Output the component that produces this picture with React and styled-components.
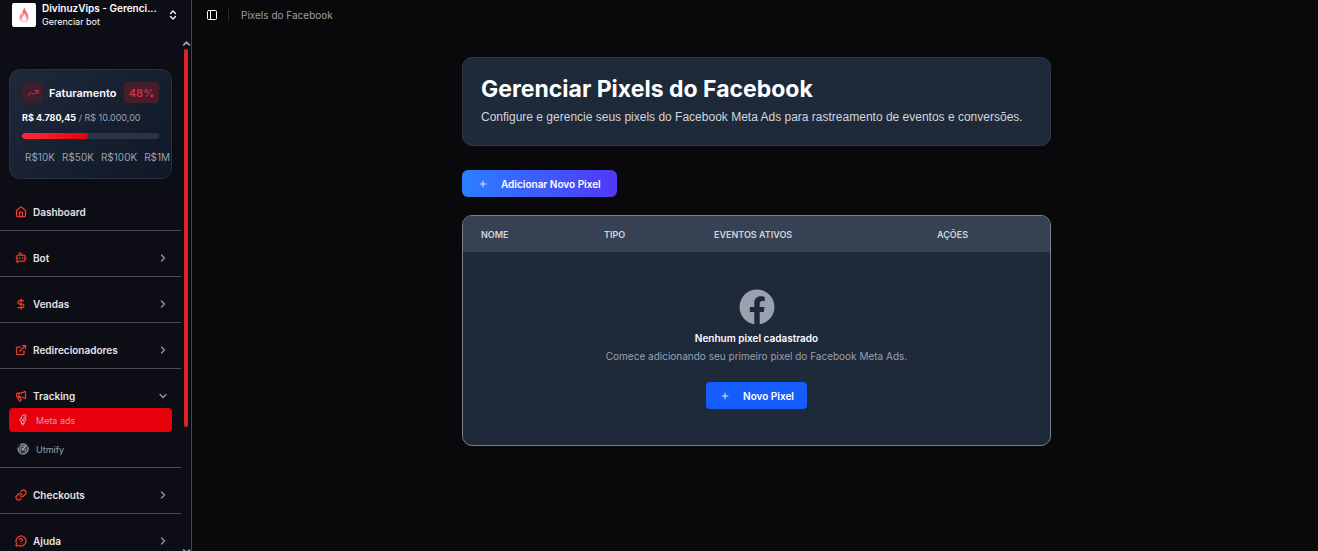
import React from "react";
import styled, { createGlobalStyle, css } from "styled-components";
import {
  BotMessageSquare,
  ChevronDown,
  ChevronRight,
  ChevronUp,
  ChevronsUpDown,
  DollarSign,
  ExternalLink,
  House,
  Link,
  Megaphone,
  MessageCircleQuestionMark,
  PanelLeft,
  Plus,
  Radar,
  TrendingUp,
} from "lucide-react";
import { FaFacebook } from "react-icons/fa";

const GlobalStyle = createGlobalStyle`
  *, *::before, *::after { box-sizing: border-box; }
  body {
    margin: 0;
    background: #09090b;
    color: #fff;
    font-family: Inter, "Liberation Sans", sans-serif;
    font-size: 10px;
  }
  h1, h2, p { margin: 0; }
  button { font: inherit; border: 0; cursor: pointer; }
  svg { flex: none; display: block; }
`;

const Shell = styled.div`
  display: flex;
  height: 100vh;
  overflow: hidden;
`;

/* ---------- sidebar ---------- */

const Sidebar = styled.aside`
  display: flex;
  flex-direction: column;
  flex: none;
  width: 192px;
  background: #0d0d15;
  border-right: 1px solid #46464e;
`;

const BotSwitcher = styled.button`
  display: flex;
  align-items: center;
  flex: none;
  gap: 6px;
  height: 38px;
  padding: 0 12px 8px;
  background: none;
  color: #fff;
  text-align: left;
`;

const BotLogo = styled.span`
  display: grid;
  place-items: center;
  flex: none;
  width: 24px;
  height: 24px;
  border-radius: 2px;
  background: #fff;
`;

const BotNames = styled.span`
  display: flex;
  flex-direction: column;
  flex: none;
  width: 119px;
  line-height: 13px;
`;

const BotName = styled.strong`
  white-space: nowrap;
  font-weight: 600;
`;

const BotRole = styled.span`
  font-size: 9px;
`;

const SidebarBody = styled.div`
  display: flex;
  flex: 1;
  min-height: 0;
  margin-bottom: -6px;
`;

const SidebarScroll = styled.div`
  flex: 1;
  min-width: 0;
  overflow: hidden;
  padding-top: 31px;
`;

const ScrollRail = styled.div`
  display: flex;
  flex-direction: column;
  align-items: center;
  flex: none;
  width: 10px;
  color: #a3a3a3;
`;

const ScrollTrack = styled.div`
  flex: 1;
  width: 4px;
`;

const ScrollThumb = styled.div`
  height: 76%;
  border-radius: 2px;
  background: #dc2626;
`;

const RevenueCard = styled.section`
  margin: 0 9px 6px;
  padding: 12px;
  height: 110px;
  border: 1px solid #2a313d;
  border-radius: 11px;
  background: linear-gradient(135deg, #1e2939, #101828);
`;

const RevenueHead = styled.div`
  display: flex;
  align-items: center;
  gap: 6px;
  font-size: 11px;
`;

const TrendBox = styled.span`
  display: grid;
  place-items: center;
  width: 21px;
  height: 21px;
  border-radius: 5px;
  background: #3d1f2d;
  color: #dc3545;
`;

const RevenueTitle = styled.h2`
  flex: 1;
  font-size: 11px;
  font-weight: 600;
`;

const Percent = styled.span`
  display: grid;
  place-items: center;
  width: 35px;
  height: 21px;
  border-radius: 4px;
  background: #471d2a;
  color: #d52f3e;
  font-weight: 600;
`;

const Amounts = styled.p`
  margin-top: 8px;
  line-height: 14px;
  font-size: 9px;
  color: #99a1af;
  white-space: nowrap;

  strong { color: #fff; }
`;

const Meter = styled.div`
  height: 6px;
  margin-top: 8px;
  border-radius: 3px;
  background: #2a3443;
  overflow: hidden;
`;

const MeterFill = styled.div`
  height: 100%;
  border-radius: 3px;
  background: linear-gradient(90deg, #fb2c36, #e7000b);
`;

const Milestones = styled.div`
  display: flex;
  gap: 7px;
  margin-top: 11px;
  padding-left: 3px;
  line-height: 15px;
  color: #99a1af;
`;

const NavGroup = styled.div`
  padding: 15px 9px 6px;
  border-bottom: 1px solid #4b4b55;
`;

const navRow = css`
  display: flex;
  align-items: center;
  width: 100%;
  height: 24px;
  border-radius: 4px;
  text-decoration: none;
`;

const NavItem = styled.button`
  ${navRow}
  gap: 6px;
  padding: 0 3px 0 6px;
  background: none;
  color: #e4e4e7;
  font-weight: 600;
  text-align: left;

  svg:first-child { color: #ee3d2c; }
  svg:last-child:not(:first-child) { color: #9a9aa5; }
`;

const NavLabel = styled.span`
  flex: 1;
`;

const SubNav = styled.div`
  display: flex;
  flex-direction: column;
  gap: 5px;
`;

const SubItem = styled.a`
  ${navRow}
  gap: 7px;
  padding: 0 8px;
  background: ${(p) => (p.$active ? "#e7000b" : "transparent")};
  color: ${(p) => (p.$active ? "#cba0aa" : "#99a1af")};
  font-size: 9px;
`;

/* ---------- main area ---------- */

const Main = styled.main`
  flex: 1;
  min-width: 0;
  overflow: hidden;
`;

const TopBar = styled.header`
  display: flex;
  align-items: center;
  height: 30px;
  padding-left: 14px;
`;

const PanelToggle = styled.button`
  display: grid;
  padding: 0;
  background: none;
  color: #fff;
`;

const TopDivider = styled.span`
  width: 1px;
  height: 12px;
  margin: 0 12px 0 10px;
  background: #2c2c30;
`;

const Crumb = styled.span`
  color: #9f9fa9;
`;

const ContentArea = styled.div`
  padding: 0 15px 0 18px;
`;

const Content = styled.div`
  display: flex;
  flex-direction: column;
  align-items: flex-start;
  max-width: 589px;
  margin: 27px auto 0;
`;

const Hero = styled.section`
  width: 100%;
  padding: 18px;
  border: 1px solid #303642;
  border-radius: 10px;
  background: #1e2939;
`;

const Title = styled.h1`
  font-size: 23px;
  line-height: 27px;
  font-weight: 700;
`;

const Subtitle = styled.p`
  margin-top: 4px;
  font-family: "Liberation Sans", sans-serif;
  font-size: 12px;
  line-height: 20px;
  color: #d1d5dc;
`;

const Button = styled.button`
  display: flex;
  align-items: center;
  height: 27px;
  gap: 13px;
  padding: 0 ${(p) => (p.$wide ? 16 : 13)}px 0 ${(p) => (p.$wide ? 16 : 14)}px;
  border-radius: ${(p) => (p.$wide ? 6 : 4)}px;
  background: ${(p) =>
    p.$wide ? "linear-gradient(90deg, #2b7fff, #4f39f6)" : "#155dfc"};
  color: #fff;
  font-weight: 600;
  white-space: nowrap;
`;

const AddRow = styled.div`
  margin: 24px 0 18px;
`;

const TableCard = styled.section`
  width: 100%;
  border: 1px solid #78808d;
  border-radius: 10px;
  background: #1e2939;
  overflow: hidden;
`;

const PixelTable = styled.table`
  width: 100%;
  border-collapse: collapse;
  table-layout: fixed;
`;

const Column = styled.col`
  width: ${(p) => p.$width || "auto"};
`;

const HeadCell = styled.th`
  height: 36px;
  padding: 0 18px;
  background: #364153;
  color: #d1d5dc;
  font-size: 9px;
  font-weight: 600;
  text-align: left;
`;

const EmptyCell = styled.td`
  padding: 37px 18px 36px;
`;

const Empty = styled.div`
  display: flex;
  flex-direction: column;
  align-items: center;
  line-height: 18px;
`;

const EmptyIcon = styled(FaFacebook)`
  color: #99a1af;
`;

const EmptyTitle = styled.h2`
  margin-top: 4px;
  font-size: 10px;
  font-weight: 600;
`;

const EmptyText = styled.p`
  margin-bottom: 17px;
  color: #99a1af;
`;

const PLUS_SIZE = 10;

const groups = [
  { label: "Dashboard", icon: House, leaf: true },
  { label: "Bot", icon: BotMessageSquare },
  { label: "Vendas", icon: DollarSign },
  { label: "Redirecionadores", icon: ExternalLink },
  { label: "Tracking", icon: Megaphone, open: true },
  { label: "Checkouts", icon: Link },
  { label: "Ajuda", icon: MessageCircleQuestionMark },
];

function FlameLogo() {
  return (
    <svg width="12" height="16" viewBox="0 0 12 16" fill="none">
      <defs>
        <linearGradient id="flame" x1="0" y1="0" x2="0" y2="1">
          <stop offset="0" stopColor="#f0525a" />
          <stop offset="1" stopColor="#fdb4b4" />
        </linearGradient>
      </defs>
      <path
        d="M6.5 0.5C7 4 10.6 6 10.6 10.2C10.6 13.4 8.6 15.4 5.9 15.4C3.3 15.4 1.4 13.3 1.4 10.5C1.4 8.6 2.2 7.4 3.2 6.2C3.3 7.4 3.6 8 4.2 8.4C4.1 5.4 5 2.6 6.5 0.5Z"
        fill="url(#flame)"
      />
      <path
        d="M6.4 6.6C6.7 8.8 8.5 10 8.5 12C8.5 13.6 7.3 14.6 6 14.6C4.7 14.6 3.6 13.6 3.6 12.2C3.6 10.4 5.8 9.4 6.4 6.6Z"
        fill="#fff"
      />
    </svg>
  );
}

function MetaAdsIcon() {
  return (
    <svg
      width="12"
      height="12"
      viewBox="0 0 24 24"
      fill="none"
      stroke="currentColor"
      strokeWidth="2"
      strokeLinecap="round"
      strokeLinejoin="round"
    >
      <path d="M17 2h-3a5 5 0 0 0-5 5v2H6v5h3v6l3 3 2-3v-6h3l1-5h-4V7a1 1 0 0 1 1-1h2z" />
      <path d="M9 9l5 5M9 14l5-5M9 19h5" />
    </svg>
  );
}

export default function App() {
  return (
    <>
      <GlobalStyle />
      <Shell>
        <Sidebar>
          <BotSwitcher>
            <BotLogo>
              <FlameLogo />
            </BotLogo>
            <BotNames>
              <BotName>DivinuzVips - Gerenci...</BotName>
              <BotRole>Gerenciar bot</BotRole>
            </BotNames>
            <ChevronsUpDown size={12} strokeWidth={2.5} />
          </BotSwitcher>
          <SidebarBody>
            <SidebarScroll>
              <RevenueCard>
                <RevenueHead>
                  <TrendBox>
                    <TrendingUp size={12} />
                  </TrendBox>
                  <RevenueTitle>Faturamento</RevenueTitle>
                  <Percent>48%</Percent>
                </RevenueHead>
                <Amounts>
                  <strong>R$ 4.780,45</strong> / R$ 10.000,00
                </Amounts>
                <Meter>
                  <MeterFill style={{ width: "48%" }} />
                </Meter>
                <Milestones>
                  <span>R$10K</span>
                  <span>R$50K</span>
                  <span>R$100K</span>
                  <span>R$1M</span>
                </Milestones>
              </RevenueCard>
              <nav>
                {groups.map(({ label, icon: Icon, leaf, open }) => (
                  <NavGroup key={label}>
                    <NavItem>
                      <Icon size={12} strokeWidth={2.5} />
                      <NavLabel>{label}</NavLabel>
                      {!leaf &&
                        (open ? (
                          <ChevronDown size={12} strokeWidth={2.5} />
                        ) : (
                          <ChevronRight size={12} strokeWidth={2.5} />
                        ))}
                    </NavItem>
                    {open && (
                      <SubNav>
                        <SubItem href="#meta" $active>
                          <MetaAdsIcon />
                          Meta ads
                        </SubItem>
                        <SubItem href="#utmify">
                          <Radar size={12} strokeWidth={2.5} />
                          Utmify
                        </SubItem>
                      </SubNav>
                    )}
                  </NavGroup>
                ))}
              </nav>
            </SidebarScroll>
            <ScrollRail>
              <ChevronUp size={11} strokeWidth={4} />
              <ScrollTrack>
                <ScrollThumb />
              </ScrollTrack>
              <ChevronDown size={11} strokeWidth={4} />
            </ScrollRail>
          </SidebarBody>
        </Sidebar>
        <Main>
          <TopBar>
            <PanelToggle aria-label="Alternar menu">
              <PanelLeft size={12} />
            </PanelToggle>
            <TopDivider />
            <Crumb>Pixels do Facebook</Crumb>
          </TopBar>
          <ContentArea>
            <Content>
              <Hero>
                <Title>Gerenciar Pixels do Facebook</Title>
                <Subtitle>
                  Configure e gerencie seus pixels do Facebook Meta Ads para
                  rastreamento de eventos e conversões.
                </Subtitle>
              </Hero>
              <AddRow>
                <Button $wide>
                  <Plus size={PLUS_SIZE} />
                  Adicionar Novo Pixel
                </Button>
              </AddRow>
              <TableCard>
                <PixelTable>
                  <colgroup>
                    <Column $width="123px" />
                    <Column $width="110px" />
                    <Column $width="223px" />
                    <Column />
                  </colgroup>
                  <thead>
                    <tr>
                      <HeadCell>NOME</HeadCell>
                      <HeadCell>TIPO</HeadCell>
                      <HeadCell>EVENTOS ATIVOS</HeadCell>
                      <HeadCell>AÇÕES</HeadCell>
                    </tr>
                  </thead>
                  <tbody>
                    <tr>
                      <EmptyCell colSpan={4}>
                        <Empty>
                          <EmptyIcon size={36} />
                          <EmptyTitle>Nenhum pixel cadastrado</EmptyTitle>
                          <EmptyText>
                            Comece adicionando seu primeiro pixel do Facebook Meta Ads.
                          </EmptyText>
                          <Button>
                            <Plus size={PLUS_SIZE} />
                            Novo Pixel
                          </Button>
                        </Empty>
                      </EmptyCell>
                    </tr>
                  </tbody>
                </PixelTable>
              </TableCard>
            </Content>
          </ContentArea>
        </Main>
      </Shell>
    </>
  );
}
